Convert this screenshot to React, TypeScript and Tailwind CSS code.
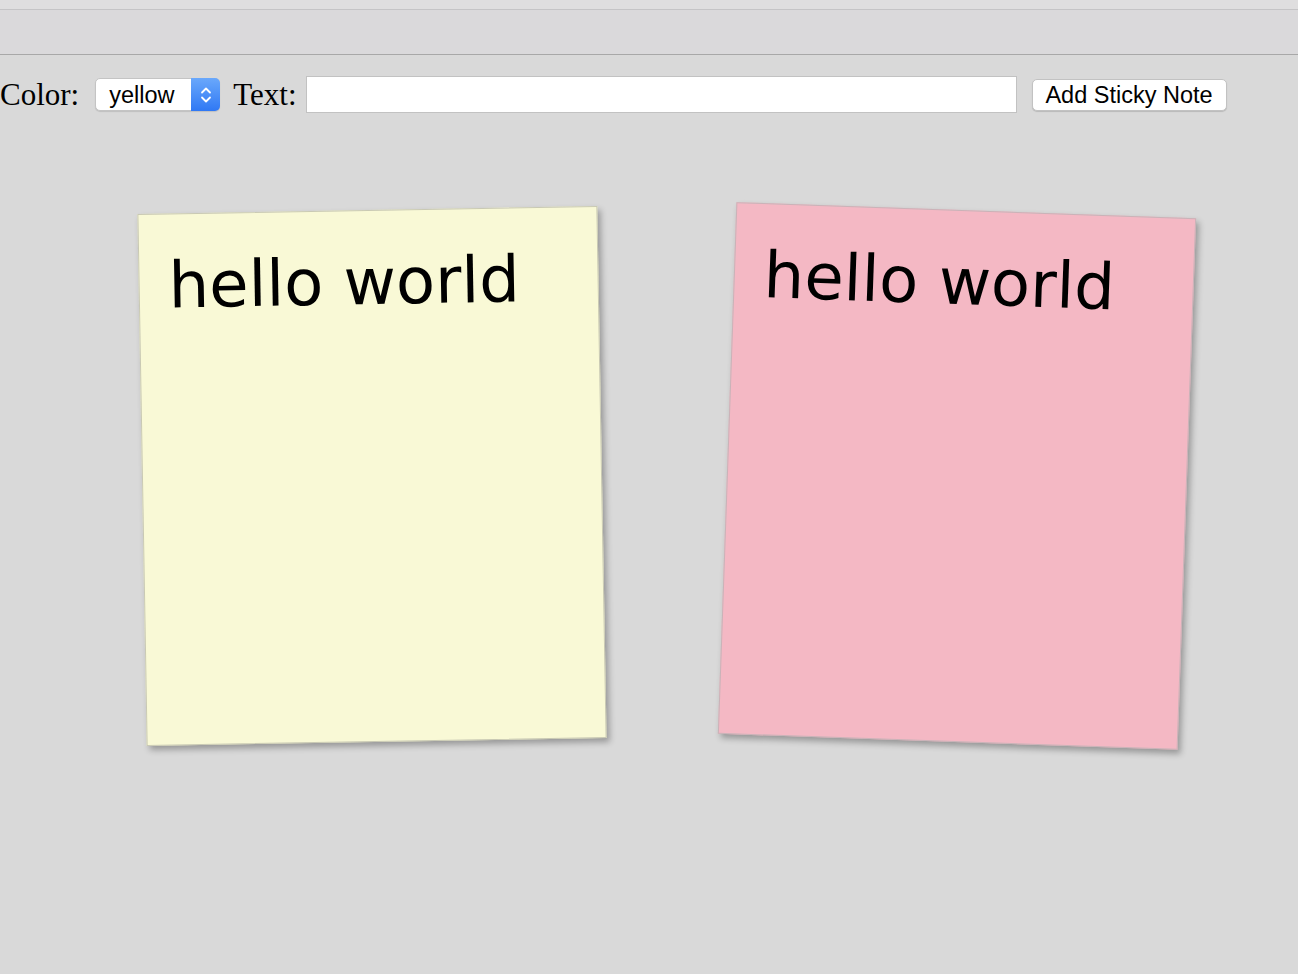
import React from "react";

type Note = { id: number; color: "yellow" | "pink"; text: string };

const notes: Note[] = [
  { id: 1, color: "yellow", text: "hello world" },
  { id: 2, color: "pink", text: "hello world" },
];

function Chevrons() {
  return (
    <svg viewBox="0 0 14 22" className="h-[22px] w-[14px]" fill="none" aria-hidden="true">
      <path d="M3 8.5 7 4.5l4 4" stroke="white" strokeWidth="1.8" strokeLinecap="round" strokeLinejoin="round" />
      <path d="M3 13.5 7 17.5l4-4" stroke="white" strokeWidth="1.8" strokeLinecap="round" strokeLinejoin="round" />
    </svg>
  );
}

function StickyNote({ note }: { note: Note }) {
  const yellow = note.color === "yellow";
  return (
    <div
      className={
        yellow
          ? "h-[532px] w-[460px] shrink-0 rotate-[-1deg] border border-[#c9c9b4] bg-[#f9f9d6] pl-[29px] pr-[20px] pt-[34px] shadow-[3px_4px_6px_rgba(0,0,0,0.3)]"
          : "h-[532px] w-[460px] shrink-0 rotate-[2deg] border border-[#c9b3b8] bg-[#f4b8c4] pl-[29px] pr-[20px] pt-[34px] shadow-[3px_4px_6px_rgba(0,0,0,0.3)]"
      }
    >
      <p className="text-[64px] leading-[1.164] text-black [font-family:'DejaVu_Sans',Verdana,sans-serif]">{note.text}</p>
    </div>
  );
}

export default function App() {
  return (
    <div className="min-h-[974px] w-full bg-[#d9d9d9]">
      {/* window chrome strip */}
      <div className="h-[9px] bg-[#dfdedf]" />
      <div className="h-[46px] border-y border-t-[#c5c4c6] border-b-[#a8a8a8] bg-[#dad9db]" />

      <div className="flex h-[58px] items-center pt-[21px]">
        <span className="text-[31px] leading-none text-black [font-family:'Liberation_Serif','Times_New_Roman',serif]">
          Color:
        </span>
        <div className="ml-[16px] flex h-[33px] w-[125px] shrink-0 items-stretch rounded-[5px] border border-[#c4c4c4] bg-white shadow-[0_1px_1px_rgba(0,0,0,0.12)]">
          <span className="flex flex-1 items-center pl-[13px] pt-[3px] text-[23.5px] leading-none text-black [font-family:'Liberation_Sans',Arial,sans-serif]">
            yellow
          </span>
          <span className="-my-px -mr-px flex w-[29px] items-center justify-center rounded-r-[5px] bg-gradient-to-b from-[#6aa8fb] to-[#2f78f4]">
            <Chevrons />
          </span>
        </div>
        <span className="ml-[13px] text-[31px] leading-none text-black [font-family:'Liberation_Serif','Times_New_Roman',serif]">
          Text:
        </span>
        <input
          type="text"
          className="ml-[9px] h-[37px] w-[711px] shrink-0 border border-[#c2c2c2] bg-white px-2 text-[20px] outline-none"
        />
        <button
          type="button"
          className="ml-[15px] h-[32px] w-[195px] shrink-0 rounded-[5px] border border-[#c2c2c2] bg-white pt-[3px] text-[23.5px] leading-none text-black shadow-[0_1px_1px_rgba(0,0,0,0.15)] [font-family:'Liberation_Sans',Arial,sans-serif]"
        >
          Add Sticky Note
        </button>
      </div>

      <div className="flex gap-[125px] pl-[142px] pt-[97px]">
        {notes.map((n) => (
          <StickyNote key={n.id} note={n} />
        ))}
      </div>
    </div>
  );
}
